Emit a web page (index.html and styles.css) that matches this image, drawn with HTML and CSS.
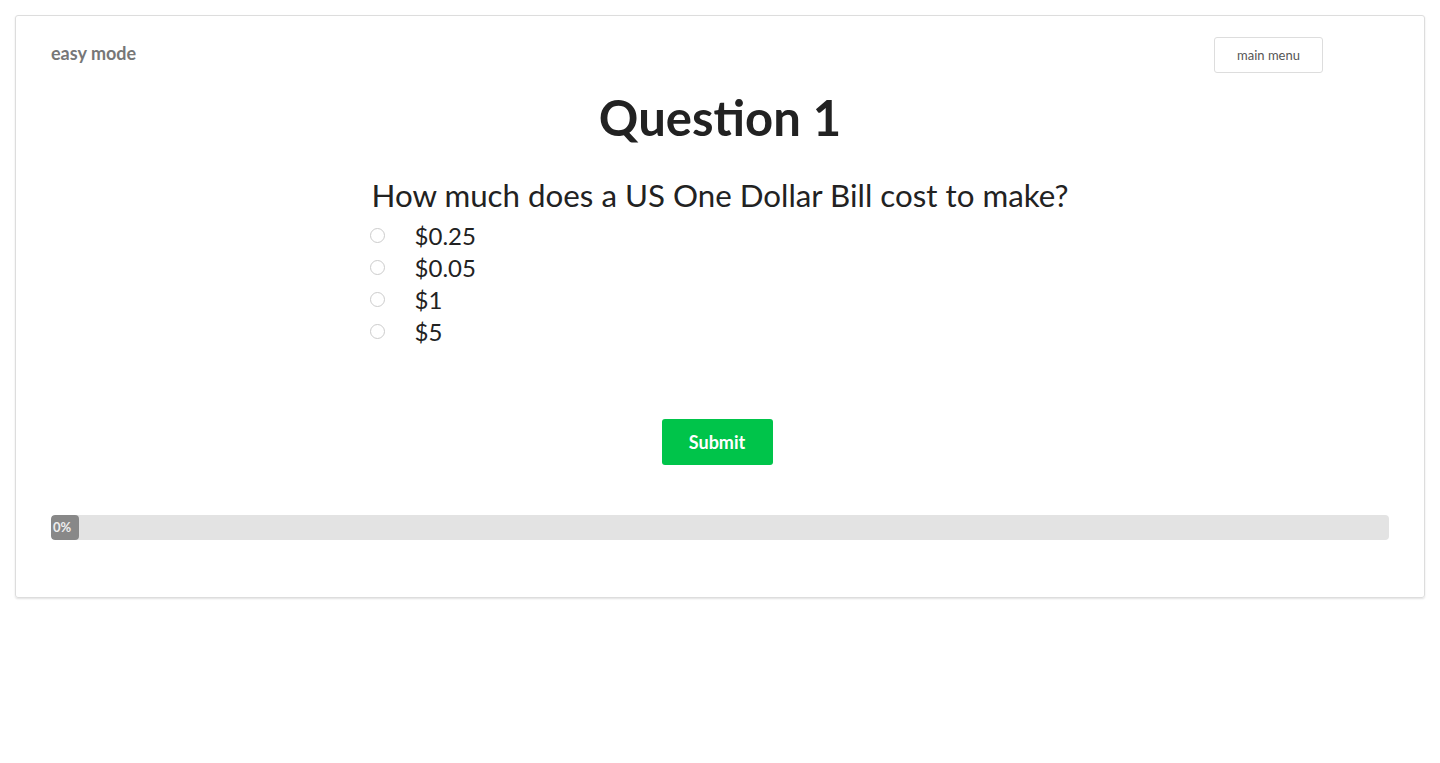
FILE: index.html
```html
<!DOCTYPE html>
<html>
<head>
<meta charset="utf-8">
<link rel="stylesheet" href="styles.css">
</head>
<body>
<div class="card">
  <div class="top-row">
    <span class="mode">easy mode</span>
    <button class="menu-btn">main menu</button>
  </div>
  <h1 class="title">Question 1</h1>
  <div class="question-wrap">
    <div class="question">
      <p class="prompt">How much does a US One Dollar Bill cost to make?</p>
      <label class="option"><span class="radio"></span><span class="opt-text">$0.25</span></label>
      <label class="option"><span class="radio"></span><span class="opt-text">$0.05</span></label>
      <label class="option"><span class="radio"></span><span class="opt-text">$1</span></label>
      <label class="option"><span class="radio"></span><span class="opt-text">$5</span></label>
    </div>
  </div>
  <div class="submit-row">
    <button class="submit">Submit</button>
  </div>
  <div class="progress">
    <div class="progress-fill">0%</div>
  </div>
</div>
</body>
</html>
```

FILE: styles.css
```css
html, body {
  margin: 0;
  padding: 0;
  background: #fff;
}
body {
  padding: 15px;
  font-family: Lato, "Open Sans", Arial, sans-serif;
  color: #222;
}
.card {
  border: 1px solid #ddd;
  border-radius: 3px;
  box-shadow: 0 1px 2px rgba(0,0,0,0.12);
  padding: 21px 35px 57px;
}
.top-row {
  display: flex;
  justify-content: space-between;
  align-items: flex-start;
  height: 36px;
}
.mode {
  font-size: 18px;
  font-weight: bold;
  color: #777;
  margin-top: 5px;
}
.menu-btn {
  font-family: inherit;
  font-size: 13px;
  color: #555;
  background: #fff;
  border: 1px solid #ddd;
  border-radius: 3px;
  width: 109px;
  height: 36px;
  margin-right: 66px;
  padding: 0;
}
.title {
  margin: 15px 0 0;
  text-align: center;
  font-size: 49px;
  line-height: 58px;
  font-weight: bold;
  color: #222;
}
.question-wrap {
  display: flex;
  justify-content: center;
  margin-top: 29px;
}
.question {
  display: flex;
  flex-direction: column;
}
.prompt {
  margin: 0 0 4px;
  font-size: 31.3px;
  line-height: 40px;
  color: #222;
}
.option {
  display: flex;
  align-items: center;
  height: 32px;
  font-size: 24px;
}
.radio {
  border: 1px solid #ccc;
  border-radius: 50%;
  box-sizing: border-box;
  width: 15px;
  height: 15px;
  margin-left: -2px;
  margin-right: 30px;
}
.opt-text {
  color: #222;
}
.submit-row {
  display: flex;
  justify-content: center;
  margin-top: 72px;
}
.submit {
  font-family: inherit;
  background: #00c44a;
  color: #fff;
  font-weight: bold;
  font-size: 18px;
  border: none;
  border-radius: 3px;
  width: 111px;
  height: 46px;
  margin-right: 6px;
}
.progress {
  margin-top: 50px;
  height: 25px;
  background: #e3e3e3;
  border-radius: 4px;
  overflow: hidden;
}
.progress-fill {
  width: 28px;
  height: 25px;
  background: #888;
  border-radius: 4px;
  color: #eee;
  font-size: 13px;
  font-weight: bold;
  line-height: 25px;
  padding-left: 2px;
  box-sizing: border-box;
  white-space: nowrap;
}
```
